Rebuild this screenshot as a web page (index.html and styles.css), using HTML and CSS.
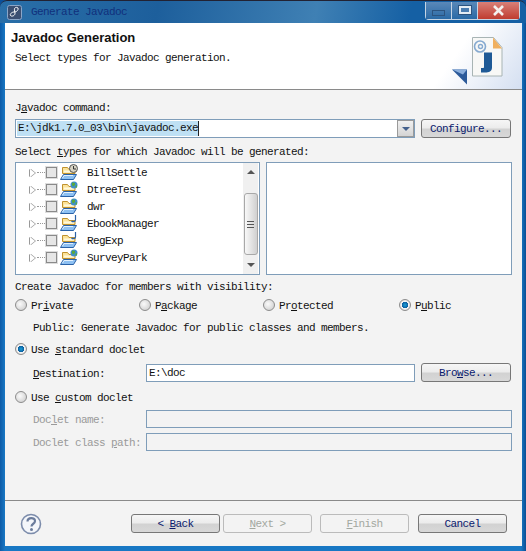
FILE: index.html
```html
<!DOCTYPE html>
<html lang="en">
<head>
    <meta charset="UTF-8">
    <meta name="viewport" content="width=device-width, initial-scale=1.0">
    <title>Generate Javadoc</title>
    <link rel="stylesheet" href="styles.css">
</head>
<body>

<svg class="defs" width="0" height="0">
    <symbol id="folder" viewBox="0 0 17 16">
        <path d="M2.500 2.500h5l1.500 2h6v4h-12.500z" fill="#fbe39a" stroke="#c0922e"/>
        <path d="M4 5.500h10v2h-10z" fill="#fff8dc"/>
        <path d="M0.500 14.500l3-5h13l-3 5z" fill="#8dc0f2" stroke="#2a62a8"/>
        <path d="M2.500 13l1.500-2.500h9" fill="none" stroke="#e2f0fd"/>
    </symbol>
    <symbol id="globe" viewBox="0 0 8 8">
        <circle cx="4" cy="4" r="3.500" fill="#3f8fc9"/>
        <path d="M2 1.500l3 0.500 0 2-2 1.500-1-1.500zM5.500 5l1.500-1 0 2-1 1z" fill="#5aa83c"/>
    </symbol>
</svg>

<div class="window">
    <header class="titlebar">
        <svg class="app-icon" width="15" height="15" viewBox="0 0 15 15">
            <rect x="0.500" y="0.500" width="14" height="14" rx="2" fill="#3b4f72" stroke="#8ba6c8"/>
            <path d="M11 3c-2-1.500-4 0-3.500 2l0.500 3c0.300 2.500-3 4-4.500 2.500-1-1.500 1.500-3.500 3.500-3.500s3.500-1 4-2.500z" fill="none" stroke="#fff"/>
        </svg>
        <span class="title-text">Generate Javadoc</span>
        <div class="win-buttons">
            <div class="win-btn"><span class="min-glyph"></span></div>
            <div class="win-btn"><span class="max-glyph"></span></div>
            <div class="win-btn close-btn">
                <svg width="13" height="11" viewBox="0 0 13 11"><path d="M2 1l9 9M11 1l-9 9" stroke="#f4f0ee" stroke-width="2.600" fill="none"/></svg>
            </div>
        </div>
    </header>

    <div class="banner">
        <div class="banner-text">
            <h1>Javadoc Generation</h1>
            <p>Select types for Javadoc generation.</p>
        </div>
        <svg class="banner-icon" width="56" height="50" viewBox="0 0 56 50">
            <path d="M5 33.500h15v15z" fill="#2c5a9a"/>
            <path d="M5 33.500h15l-4 5z" fill="#8aaedc"/>
            <path d="M25.500 1.500h21l8.500 10v28.500h-29.500z" fill="#f8f8f6" stroke="#a8b4b4"/>
            <path d="M46 1.500l9 11h-9z" fill="#f0b060"/>
            <circle cx="33" cy="10.500" r="5.500" fill="none" stroke="#86aad0" stroke-width="1.600"/>
            <circle cx="33.500" cy="10.500" r="2" fill="none" stroke="#86aad0" stroke-width="1.400"/>
            <path d="M37 16.500h8v15c0 4-3 5-7 5h-4v-4.500h2c1 0 1-0.500 1-2z" fill="#1f5a96"/>
        </svg>
    </div>

    <main class="content">
        <label class="label label-first">J<u>a</u>vadoc command:</label>
        <div class="form-row combo-row">
            <div class="combo">
                <span class="combo-value"><span class="selected">E:\jdk1.7.0_03\bin\javadoc.exe</span></span>
                <span class="combo-arrow"></span>
            </div>
            <button class="btn side-btn">Configure...</button>
        </div>

        <label class="label label-types">Select <u>t</u>ypes for which Javadoc will be generated:</label>
        <div class="panes">
            <div class="pane tree">
                <ul class="tree-list">
                    <li class="tree-item">
                        <span class="twisty"></span><span class="dots"></span><span class="check"></span>
                        <span class="project">
                            <svg width="17" height="16"><use href="#folder"/></svg>
                            <svg class="deco" width="9" height="9" viewBox="0 0 9 9"><circle cx="4.500" cy="4.500" r="4" fill="#d8d4c4" stroke="#555"/><path d="M4.500 2v3h2.500" stroke="#333" fill="none"/></svg>
                        </span>
                        <span>BillSettle</span>
                    </li>
                    <li class="tree-item">
                        <span class="twisty"></span><span class="dots"></span><span class="check"></span>
                        <span class="project">
                            <svg width="17" height="16"><use href="#folder"/></svg>
                            <svg class="deco" width="8" height="8"><use href="#globe"/></svg>
                        </span>
                        <span>DtreeTest</span>
                    </li>
                    <li class="tree-item">
                        <span class="twisty"></span><span class="dots"></span><span class="check"></span>
                        <span class="project">
                            <svg width="17" height="16"><use href="#folder"/></svg>
                            <svg class="deco" width="8" height="8"><use href="#globe"/></svg>
                        </span>
                        <span>dwr</span>
                    </li>
                    <li class="tree-item">
                        <span class="twisty"></span><span class="dots"></span><span class="check"></span>
                        <span class="project">
                            <svg width="17" height="16"><use href="#folder"/></svg>
                            <svg class="deco" width="8" height="8" viewBox="0 0 8 8"><path d="M5.500 0v5c0 2-3 2-4 1" fill="none" stroke="#2a62a8" stroke-width="1.200"/></svg>
                        </span>
                        <span>EbookManager</span>
                    </li>
                    <li class="tree-item">
                        <span class="twisty"></span><span class="dots"></span><span class="check"></span>
                        <span class="project">
                            <svg width="17" height="16"><use href="#folder"/></svg>
                            <svg class="deco" width="8" height="8" viewBox="0 0 8 8"><path d="M5.500 0v5c0 2-3 2-4 1" fill="none" stroke="#2a62a8" stroke-width="1.200"/></svg>
                        </span>
                        <span>RegExp</span>
                    </li>
                    <li class="tree-item">
                        <span class="twisty"></span><span class="dots"></span><span class="check"></span>
                        <span class="project">
                            <svg width="17" height="16"><use href="#folder"/></svg>
                            <svg class="deco" width="8" height="8"><use href="#globe"/></svg>
                        </span>
                        <span>SurveyPark</span>
                    </li>
                </ul>
                <div class="scrollbar">
                    <span class="scroll-up"></span>
                    <div class="scroll-thumb"><span class="grip"></span></div>
                    <span class="scroll-down"></span>
                </div>
            </div>
            <div class="pane"></div>
        </div>

        <label class="label label-create">Create Javadoc for members with visibility:</label>
        <div class="visibility">
            <div class="radio-item"><span class="radio"></span><span class="radio-text">Pr<u>i</u>vate</span></div>
            <div class="radio-item"><span class="radio"></span><span class="radio-text">P<u>a</u>ckage</span></div>
            <div class="radio-item"><span class="radio"></span><span class="radio-text">Pr<u>o</u>tected</span></div>
            <div class="radio-item"><span class="radio on"></span><span class="radio-text">P<u>u</u>blic</span></div>
        </div>
        <p class="hint">Public: Generate Javadoc for public classes and members.</p>

        <div class="radio-item doclet-standard"><span class="radio on"></span><span class="radio-text">Use <u>s</u>tandard doclet</span></div>
        <div class="form-row dest-row">
            <label class="field-label"><u>D</u>estination:</label>
            <div class="text-input grow">E:\doc</div>
            <button class="btn side-btn">Bro<u>w</u>se...</button>
        </div>
        <div class="radio-item doclet-custom"><span class="radio"></span><span class="radio-text">Use <u>c</u>ustom doclet</span></div>
        <div class="form-row name-row">
            <label class="field-label disabled">Doc<u>l</u>et name:</label>
            <div class="text-input grow"></div>
        </div>
        <div class="form-row path-row">
            <label class="field-label disabled">Doclet class <u>p</u>ath:</label>
            <div class="text-input grow"></div>
        </div>
    </main>

    <footer class="footer">
        <svg class="help" width="22" height="22" viewBox="0 0 22 22">
            <circle cx="11" cy="11" r="9.500" fill="#f4f6fa" stroke="#7c8cab" stroke-width="1.600"/>
            <path d="M7.500 8.500c0-4.500 7.500-4.500 7.500-0.500 0 3-3.500 2.500-3.500 5.500" fill="none" stroke="#6b7c9c" stroke-width="2.200"/>
            <circle cx="11.500" cy="16.500" r="1.500" fill="#6b7c9c"/>
        </svg>
        <div class="footer-buttons">
            <button class="btn nav-btn">&lt; <u>B</u>ack</button>
            <button class="btn nav-btn" disabled><u>N</u>ext &gt;</button>
            <button class="btn nav-btn finish" disabled><u>F</u>inish</button>
            <button class="btn nav-btn cancel">Cancel</button>
        </div>
    </footer>
</div>

</body>
</html>
```

FILE: styles.css
```css
html, body {
    margin: 0;
    padding: 0;
}

body {
    width: 526px;
    height: 551px;
    overflow: hidden;
    background-color: #0a4f9a;
    font-family: "Liberation Mono", monospace;
    font-size: 11px;
    letter-spacing: -0.6px;
    color: #111;
}

.defs {
    position: absolute;
}

u {
    text-underline-offset: 1px;
}

.window {
    display: flex;
    flex-direction: column;
    height: 551px;
    box-sizing: border-box;
    padding: 0 4px 5px 5px;
    border-radius: 7px 7px 0 0;
    background: linear-gradient(90deg, #0d5aa6 0, #1878c4 5px, #1878c4 521px, #0b4e94 100%);
}

.titlebar {
    display: flex;
    align-items: center;
    height: 23px;
    margin: 0 -4px 0 -5px;
    padding-left: 7px;
    background: linear-gradient(100deg, #2a6fa8 0, #1d5f9c 30%, #3f80b4 60%, #1560a4 78%, #1560a4 100%);
    border-radius: 7px 7px 0 0;
    border-top: 1px solid #223;
    box-sizing: border-box;
}

.app-icon {
    margin-right: 9px;
}

.title-text {
    color: #11307c;
}

.win-buttons {
    display: flex;
    margin-left: auto;
    margin-right: 6px;
    margin-bottom: 3px;
    height: 17px;
    border: 1px solid #c5d4e4;
    border-top: none;
    border-radius: 0 0 4px 4px;
}

.win-btn {
    display: flex;
    align-items: center;
    justify-content: center;
    width: 25px;
    border-right: 1px solid #c5d4e4;
    background: linear-gradient(#5a88b8, #2a6aa6);
}

.close-btn {
    width: 41px;
    border-right: none;
    background: linear-gradient(#d88078, #c03c30);
}

.min-glyph {
    width: 11px;
    height: 4px;
    margin-top: 5px;
    border: 1px solid #2c5480;
}

.max-glyph {
    width: 8px;
    height: 4px;
    border: 2px solid #e4ecf4;
    outline: 1px solid #2c5480;
    background-color: #4a7cb0;
}

.banner {
    display: flex;
    justify-content: space-between;
    height: 66px;
    border-bottom: 1px solid #8a8a8a;
    box-sizing: content-box;
    background: linear-gradient(125deg, #fff 0, #fff 84%, #d4dff1 100%);
    background-color: #fff;
}

.banner-text h1 {
    margin: 7px 0 0 6px;
    font-family: "Liberation Sans", sans-serif;
    font-size: 13px;
    letter-spacing: 0;
    line-height: 16px;
    color: #111;
}

.banner-text p {
    margin: 5px 0 0 10px;
    line-height: 14px;
}

.banner-icon {
    margin: 13px 19px 0 0;
}

.content {
    flex: 1;
    padding: 0 10px;
    background-color: #f3f3f3;
}

.label {
    display: block;
    height: 14px;
    line-height: 16px;
}

.label-first {
    margin-top: 10px;
}

.label-types {
    margin-top: 6px;
}

.label-create {
    margin-top: 4px;
}

.form-row {
    display: flex;
    align-items: center;
}

.combo-row {
    margin-top: 5px;
    height: 19px;
}

.combo {
    display: flex;
    flex: 1;
    height: 19px;
    box-sizing: border-box;
    border: 1px solid #7f9db9;
    background-color: #fff;
}

.combo-value {
    flex: 1;
    padding: 1px 1px;
    line-height: 15px;
}

.selected {
    display: inline-block;
    height: 15px;
    padding-left: 1px;
    background-color: #bee0f4;
    border-right: 1px solid #222;
}

.combo-arrow {
    position: relative;
    width: 17px;
    box-sizing: border-box;
    border: 1px solid #9a9a9a;
    background: linear-gradient(#f0f0f0, #d4d4d4);
}

.combo-arrow::after {
    content: "";
    position: absolute;
    left: 4px;
    top: 6px;
    border: 4px solid transparent;
    border-top: 4px solid #44608c;
    border-bottom: none;
}

.btn {
    height: 19px;
    padding: 1px 0 0;
    box-sizing: border-box;
    font-family: inherit;
    font-size: inherit;
    letter-spacing: inherit;
    color: #0a1a6e;
    border: 1px solid #777;
    border-radius: 3px;
    background: linear-gradient(#f6f6f6 0, #ececec 45%, #d2d2d2 55%, #d8d8d8 100%);
}

.btn:disabled {
    color: #a3a8a0;
    border-color: #bbb;
    background: #f3f3f3;
}

.side-btn {
    width: 90px;
    margin-left: 6px;
    margin-right: 1px;
}

.panes {
    display: flex;
    gap: 6px;
    margin-top: 4px;
}

.pane {
    flex: 1;
    height: 113px;
    box-sizing: border-box;
    border: 1px solid #7f9db9;
    background-color: #fff;
}

.tree {
    display: flex;
    flex: 0 0 245px;
}

.tree-list {
    flex: 1;
    margin: 0;
    padding: 1px 0 0;
    list-style: none;
}

.tree-item {
    display: flex;
    align-items: center;
    height: 17px;
    padding-left: 14px;
}

.twisty {
    width: 0;
    height: 0;
    border-left: 5px solid #fff;
    border-top: 4px solid transparent;
    border-bottom: 4px solid transparent;
    filter: drop-shadow(-1px 0 0 #999) drop-shadow(1px 0 0 #999);
}

.dots {
    width: 8px;
    margin: 0 1px 0 2px;
    border-top: 1px dotted #999;
}

.check {
    width: 11px;
    height: 11px;
    box-sizing: border-box;
    border: 1px solid #8a8a8a;
    background-color: #e6e6e6;
    outline: 1px solid #ddd;
}

.project {
    position: relative;
    display: flex;
    width: 17px;
    height: 16px;
    margin: 0 10px 0 3px;
}

.deco {
    position: absolute;
    right: -1px;
    top: -1px;
}

.scrollbar {
    display: flex;
    flex-direction: column;
    align-items: center;
    justify-content: space-between;
    width: 15px;
    margin-right: 1px;
    background-color: #f0f0f0;
}

.scroll-up,
.scroll-down {
    width: 0;
    height: 0;
    margin: 7px 0;
    border-left: 4px solid transparent;
    border-right: 4px solid transparent;
}

.scroll-up {
    border-bottom: 4px solid #555;
}

.scroll-down {
    border-top: 4px solid #555;
}

.scroll-thumb {
    display: flex;
    align-items: center;
    justify-content: center;
    width: 14px;
    height: 62px;
    margin-top: 11px;
    box-sizing: border-box;
    border: 1px solid #a8a8a8;
    border-radius: 3px;
    background: linear-gradient(90deg, #f8f8f8, #d0d0d0);
}

.grip {
    width: 7px;
    height: 7px;
    background: repeating-linear-gradient(#555 0, #555 1px, transparent 1px, transparent 3px);
}

.visibility {
    display: grid;
    grid-template-columns: 124px 124px 136px 1fr;
    margin-top: 5px;
}

.radio-item {
    display: flex;
    align-items: center;
    height: 14px;
}

.radio {
    width: 12px;
    height: 12px;
    margin-right: 4px;
    box-sizing: border-box;
    border: 1px solid #8c8c8c;
    border-radius: 50%;
    background: radial-gradient(circle at 40% 40%, #fafafa, #c8c8c8);
}

.radio.on {
    background: radial-gradient(circle at 50% 50%, #1aa0d8 0, #0a5a9c 45%, #f4f4f4 50%, #d0d0d0 100%);
}

.radio-text {
    padding-top: 2px;
}

.hint {
    height: 14px;
    margin: 8px 0 0 18px;
    line-height: 16px;
}

.doclet-standard {
    margin-top: 8px;
}

.dest-row {
    margin-top: 7px;
    height: 19px;
}

.doclet-custom {
    margin-top: 8px;
}

.name-row {
    margin-top: 6px;
    height: 18px;
}

.path-row {
    margin-top: 5px;
    height: 18px;
}

.field-label {
    width: 113px;
    padding-left: 18px;
    padding-top: 2px;
}

.disabled {
    color: #9a9a9a;
}

.text-input {
    height: 18px;
    box-sizing: border-box;
    padding: 0 2px;
    line-height: 16px;
    border: 1px solid #7f9db9;
    background-color: #fff;
}

.name-row .text-input,
.path-row .text-input {
    background-color: #f3f3f3;
}

.grow {
    flex: 1;
}

.footer {
    display: flex;
    align-items: center;
    justify-content: space-between;
    height: 45px;
    border-top: 1px solid #8a8a8a;
    background-color: #f3f3f3;
}

.help {
    margin-left: 15px;
}

.footer-buttons {
    display: flex;
    margin-right: 15px;
    gap: 3px;
}

.nav-btn {
    width: 89px;
}

.finish {
    margin-left: 5px;
}

.cancel {
    margin-left: 6px;
}
```
